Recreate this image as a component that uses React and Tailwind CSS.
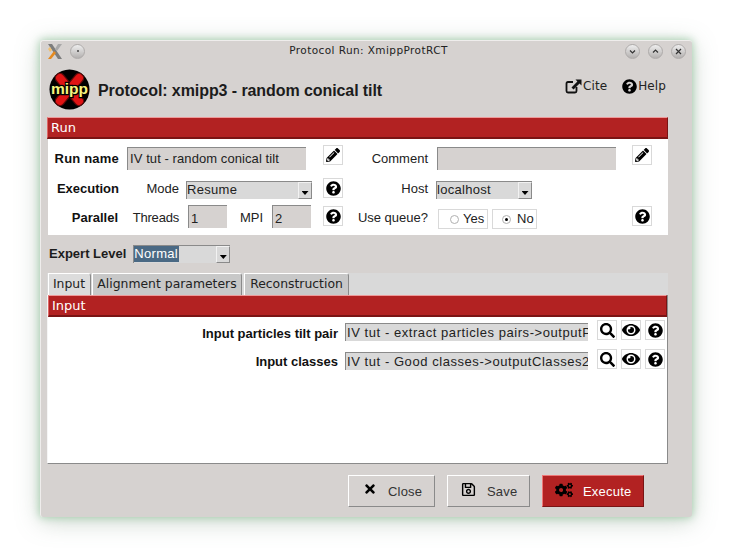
import React from "react";
import { FaPencilAlt, FaQuestionCircle, FaSearch, FaEye, FaTimes, FaRegSave, FaCogs } from "react-icons/fa";

const sans = "font-['Liberation_Sans',sans-serif]";
const dejavu = "font-['DejaVu_Sans',sans-serif]";

function IconBtn({ children, className = "" }) {
  return (
    <div className={"w-5 h-5 shrink-0 bg-white border border-[#d9d9d9] flex items-center justify-center text-black " + className}>
      {children}
    </div>
  );
}

function Bar({ children }) {
  return (
    <div className={"h-[22px] bg-[#b22222] border-t border-t-[#ee9999] border-l border-l-[#d66] border-b-2 border-b-[#7a1414] border-r border-r-[#7a1414] text-white text-[13px] leading-[20px] pl-[3px] " + dejavu}>
      {children}
    </div>
  );
}

function Input({ className = "", children }) {
  return (
    <div className={"h-[23px] shrink-0 bg-[#d6d2d0] border-t border-l border-[#8a8a8a] text-[13px] leading-[21px] pl-[2px] text-[#222] overflow-hidden whitespace-nowrap " + className}>
      {children}
    </div>
  );
}

function Select({ className = "", children, selected }) {
  return (
    <div className={"h-[18px] shrink-0 bg-[#d9d9d9] border-t border-l border-[#8a8a8a] flex items-stretch text-[13px] leading-[16px] text-[#222] tracking-[0.3px] " + className}>
      <span className="flex-1">
        {selected ? <span className="bg-[#4a6984] text-white inline-block pr-[1px]">{children}</span> : children}
      </span>
      <span className="w-[14px] bg-[#d9d9d9] border border-[#f2f2f2] border-r-[#8a8a8a] border-b-[#8a8a8a] flex items-end justify-center pb-[3px]">
        <span className="w-[7px] h-[4px] bg-black [clip-path:polygon(0_0,100%_0,50%_100%)]"></span>
      </span>
    </div>
  );
}

function Radio({ label, checked, className = "" }) {
  return (
    <div className={"h-5 bg-white border border-[#d9d9d9] flex items-center text-[13px] text-[#222] " + className}>
      <span className="w-[9px] h-[9px] rounded-full border border-[#b0b0b0] flex items-center justify-center bg-white">
        {checked && <span className="w-[3px] h-[3px] rounded-full bg-black"></span>}
      </span>
      {label}
    </div>
  );
}

function WinBtn({ children }) {
  return (
    <div className="w-[15px] h-[15px] rounded-full border border-[#aeabaa] bg-gradient-to-b from-[#eeeeee] to-[#b4b1b0] flex items-center justify-center">
      <svg width="9" height="9" viewBox="0 0 9 9" fill="none" stroke="#333" strokeWidth="1.2">{children}</svg>
    </div>
  );
}

function Logo() {
  return (
    <svg width="41" height="41" viewBox="0 0 41 41" className="shrink-0">
      <circle cx="20.5" cy="20.5" r="20" fill="#000" />
      <g stroke="#5a0808" strokeWidth="10.5" strokeLinecap="round">
        <path d="M11 9 L30 32" />
        <path d="M30 9 L11 32" />
      </g>
      <g stroke="#df1414" strokeWidth="8" strokeLinecap="round">
        <path d="M11 9 L30 32" />
        <path d="M30 9 L11 32" />
      </g>
      <text x="20.5" y="25" textAnchor="middle" fontFamily="Liberation Sans, sans-serif" fontWeight="700" fontSize="15.5" fill="#f6f37e" stroke="#000" strokeWidth="2.5" paintOrder="stroke">mipp</text>
    </svg>
  );
}

export default function App() {
  return (
    <div className={"w-[732px] h-[557px] bg-white pt-[40px] pl-[40px] overflow-hidden " + sans}>
      <div className="w-[652px] h-[477px] bg-[#d6d2d0] rounded-[3px] border-t border-l border-[#efedec] flex flex-col shadow-[0_0_8px_#9fcca8,0_4px_24px_rgba(100,130,105,0.35)]">
        {/* title bar */}
        <div className="h-[20px] flex items-center pl-[6px] pr-[6px]">
          <svg width="16" height="17" viewBox="0 0 16 17" className="shrink-0">
            <path d="M1 1 L5 1 L15 16 L11 16 Z" fill="#7d7d7d" />
            <path d="M11 1 L15 1 L10 8 L8 6 Z" fill="#a8a8a8" />
            <path d="M7 8 L9 10 L4 16 L1 16 Z" fill="#e58a1f" />
            <path d="M3 4 L5 7 L3 9 L1 6 Z" fill="#f0c070" />
          </svg>
          <div className="ml-[7px] w-[15px] h-[15px] rounded-full border border-[#aeabaa] bg-gradient-to-b from-[#eeeeee] to-[#b4b1b0] flex items-center justify-center">
            <span className="w-[2px] h-[2px] rounded-full bg-[#444]"></span>
          </div>
          <div className={"flex-1 text-center text-[10.5px] tracking-[0.42px] text-[#222] pl-[27px] " + dejavu}>Protocol Run: XmippProtRCT</div>
          <div className="flex gap-2">
            <WinBtn><path d="M2 3.5 L4.5 6 L7 3.5" /></WinBtn>
            <WinBtn><path d="M2 5.5 L4.5 3 L7 5.5" /></WinBtn>
            <WinBtn><path d="M2 2 L7 7 M7 2 L2 7" /></WinBtn>
          </div>
        </div>

        {/* header */}
        <div className="h-[48px] mt-[8px] flex items-start pl-[8px] pr-[26px]">
          <Logo />
          <div className="ml-[8px] mt-[10px] text-[16px] font-bold text-[#1c1c1c] tracking-[-0.08px]">Protocol: xmipp3 - random conical tilt</div>
          <div className={"ml-auto mt-[8px] flex items-center text-[12px] text-[#222] tracking-[0.1px] " + dejavu}>
            <svg width="17" height="15" viewBox="0 0 17 15" className="mr-[1px]">
              <path d="M8 3 H3 Q1.5 3 1.5 4.5 V12 Q1.5 13.5 3 13.5 H10 Q11.5 13.5 11.5 12 V8" fill="none" stroke="#111" strokeWidth="1.8" />
              <path d="M10.5 0.5 H16.5 V6.5 L14.5 4.6 L8.5 10.5 L6.5 8.5 L12.4 2.5 Z" fill="#111" />
            </svg>
            Cite
            <FaQuestionCircle className="ml-[15px] mr-[1px] text-[15px] text-black" />
            Help
          </div>
        </div>

        {/* run section */}
        <div className="ml-[6px] w-[621px]">
          <Bar>Run</Bar>
          <div className="bg-white h-[96px] ml-[1px] text-[13px] text-[#222] pt-[6px]">
            <div className="flex items-start h-[25px]">
              <div className="w-[71px] mt-[4px] text-right font-bold text-[#111] tracking-[0.2px]">Run name</div>
              <Input className="ml-2 w-[179px] mt-[2px] tracking-[0.08px]">IV tut - random conical tilt</Input>
              <IconBtn className="ml-[17px]"><FaPencilAlt size={14} /></IconBtn>
              <div className="w-[85px] mt-[4px] text-right">Comment</div>
              <Input className="ml-[9px] w-[179px] mt-[2px]"></Input>
              <IconBtn className="ml-4"><FaPencilAlt size={14} /></IconBtn>
            </div>
            <div className="flex items-start mt-[8px] h-5">
              <div className="w-[71px] mt-[1px] text-right font-bold text-[#111]">Execution</div>
              <div className="w-[60px] mt-[1px] text-right">Mode</div>
              <Select className="ml-[7px] w-[126px] mt-[3px]">Resume</Select>
              <IconBtn className="ml-[11px]"><FaQuestionCircle size={15} /></IconBtn>
              <div className="w-[85px] mt-[1px] text-right">Host</div>
              <Select className="ml-2 w-[96px] mt-[3px]">localhost</Select>
            </div>
            <div className="flex items-start mt-[7px] h-6">
              <div className="w-[70px] mt-[3px] text-right font-bold text-[#111]">Parallel</div>
              <div className="w-[61px] mt-[3px] text-right tracking-[-0.2px]">Threads</div>
              <Input className="ml-[9px] w-[39px] !leading-[26px]">1</Input>
              <div className="w-[36px] mt-[3px] text-right">MPI</div>
              <Input className="ml-[9px] w-[39px] !leading-[26px]">2</Input>
              <IconBtn className="ml-[12px] mt-[1px]"><FaQuestionCircle size={15} /></IconBtn>
              <div className="w-[85px] mt-[3px] text-right">Use queue?</div>
              <Radio label="Yes" className="ml-[10px] w-[50px] mt-[4px] pl-[11px] gap-[4px]" />
              <Radio label="No" checked className="ml-1 w-[45px] mt-[4px] pl-[9px] gap-[6px]" />
              <IconBtn className="ml-[95px] mt-[1px]"><FaQuestionCircle size={15} /></IconBtn>
            </div>
          </div>
        </div>

        {/* expert level */}
        <div className="mt-[10px] ml-[8px] flex items-center h-[18px] text-[13px]">
          <div className="font-bold text-[#1c1c1c]">Expert Level</div>
          <Select selected className="ml-[7px] w-[97px]">Normal</Select>
        </div>

        {/* tabs */}
        <div className="mt-[10px] ml-[6px] w-[621px]">
          <div className={"h-[22px] bg-[#d9d9d9] flex items-end pl-[1px] gap-[1px] text-[12.4px] text-[#222] whitespace-nowrap " + dejavu}>
            <div className="h-[22px] w-[43px] pr-[1px] bg-[#dcdcdc] border-t border-l border-white border-r-[#8a8a8a] border-r rounded-tr-[3px] flex items-center justify-center">Input</div>
            <div className="h-[22px] w-[150px] bg-[#c8c8c8] border-t border-l border-white border-r-[#8a8a8a] border-r rounded-tr-[3px] flex items-center justify-center">Alignment parameters</div>
            <div className="ml-[1px] h-[22px] w-[105px] bg-[#c8c8c8] border-t border-l border-white border-r-[#8a8a8a] border-r rounded-tr-[3px] flex items-center justify-center">Reconstruction</div>
          </div>
          <div className="border-r border-b border-[#8a8a8a] border-l border-l-[#f5f5f5] bg-white h-[169px]">
            <Bar>Input</Bar>
            <div className="text-[13px] font-bold text-[#111]">
              <div className="flex items-start mt-[3px] h-5">
                <div className="w-[290px] mt-[4px] text-right">Input particles tilt pair</div>
                <Input className="ml-[7px] w-[243px] !pl-[1px] !h-[18px] !bg-[#d9d9d9] !leading-[17px] font-normal tracking-[0.56px] mt-[3px]">IV tut - extract particles pairs-&gt;outputParticlesTiltPair</Input>
                <IconBtn className="ml-[9px]"><FaSearch size={15} /></IconBtn>
                <IconBtn className="ml-1"><FaEye size={18} /></IconBtn>
                <IconBtn className="ml-1"><FaQuestionCircle size={15} /></IconBtn>
              </div>
              <div className="flex items-start mt-[9px] h-5">
                <div className="w-[290px] mt-[3px] text-right">Input classes</div>
                <Input className="ml-[7px] w-[243px] !pl-[1px] !h-[18px] !bg-[#d9d9d9] !leading-[17px] font-normal tracking-[0.56px] mt-[3px]">IV tut - Good classes-&gt;outputClasses2D</Input>
                <IconBtn className="ml-[9px]"><FaSearch size={15} /></IconBtn>
                <IconBtn className="ml-1"><FaEye size={18} /></IconBtn>
                <IconBtn className="ml-1"><FaQuestionCircle size={15} /></IconBtn>
              </div>
            </div>
          </div>
        </div>

        {/* footer */}
        <div className="mt-[11px] ml-[307px] flex items-stretch h-[32px] text-[13px]">
          <div className="w-[87px] border border-t-white border-l-white border-r-[#8a8a8a] border-b-[#8a8a8a] flex items-center pl-[14px] text-[#333]">
            <FaTimes size={14} className="text-black -mt-[4px]" />
            <span className="ml-[11px] mt-[2px] tracking-[0.2px]">Close</span>
          </div>
          <div className="ml-3 w-[83px] border border-t-white border-l-white border-r-[#8a8a8a] border-b-[#8a8a8a] flex items-center pl-[13px] text-[#333]">
            <FaRegSave size={15} className="text-black -mt-[4px]" />
            <span className="ml-[11px] mt-[2px] tracking-[0.2px]">Save</span>
          </div>
          <div className="ml-3 w-[102px] bg-[#b22222] border border-t-[#ee7777] border-l-[#ee7777] border-r-[#7a1414] border-b-[#7a1414] flex items-center pl-[12px] text-white">
            <FaCogs size={18} className="text-black -mt-[3px]" />
            <span className="ml-[10px] mt-[2px] tracking-[0.2px]">Execute</span>
          </div>
        </div>
      </div>
    </div>
  );
}
